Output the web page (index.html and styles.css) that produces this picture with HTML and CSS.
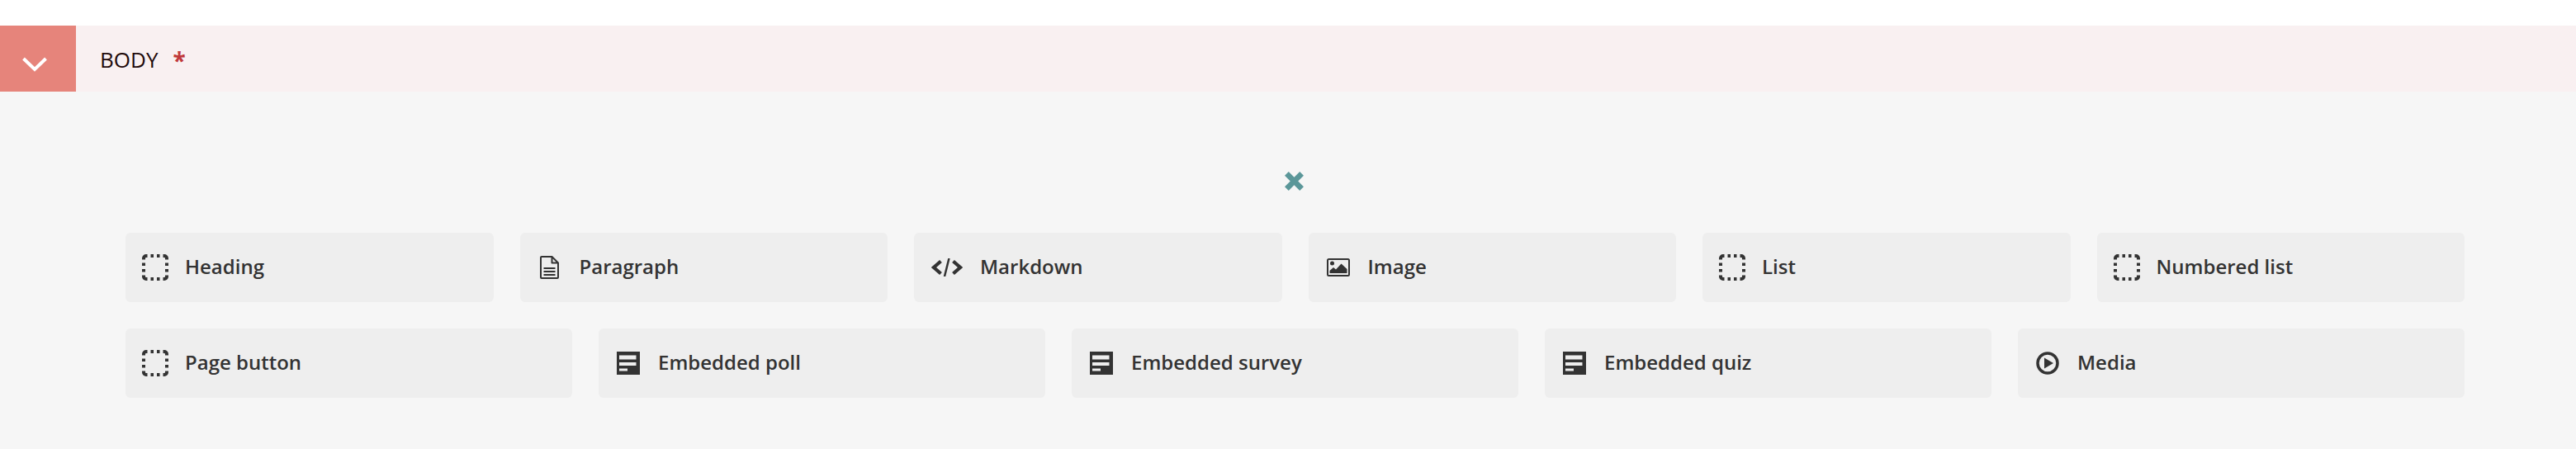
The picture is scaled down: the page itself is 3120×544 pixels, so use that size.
FILE: index.html
```html
<!DOCTYPE html>
<html lang="en">
<head>
<meta charset="utf-8">
<title>Body</title>
<link rel="stylesheet" href="styles.css">
</head>
<body>
<svg class="defs" width="0" height="0" aria-hidden="true">
  <defs>
    <symbol id="i-dashed" viewBox="0 0 32 32">
      <path fill="none" stroke="#333" stroke-width="4" d="M2 6.500V5a3 3 0 0 1 3-3h1.500M10.500 2h3.500M18 2h3.500M25.500 2H27a3 3 0 0 1 3 3v1.500M30 10.500V14M30 18v3.500M30 25.500V27a3 3 0 0 1-3 3h-1.500M21.500 30H18M14 30h-3.500M6.500 30H5a3 3 0 0 1-3-3v-1.500M2 21.500V18M2 14v-3.500"/>
    </symbol>
    <symbol id="i-doc" viewBox="0 0 23 28">
      <path fill="none" stroke="#333" stroke-width="2" stroke-linejoin="round" d="M2 1h12.500L22 8.500V26a1 1 0 0 1-1 1H2a1 1 0 0 1-1-1V2a1 1 0 0 1 1-1zM14.500 1v7.500H22"/>
      <path fill="none" stroke="#333" stroke-width="2" d="M4.500 15h14M4.500 19h14M4.500 23h14" />
    </symbol>
    <symbol id="i-code" viewBox="0 0 38 22">
      <path fill="none" stroke="#333" stroke-width="4.200" d="M11.500 3.500 3 11l8.500 7.500M26.500 3.500 35 11l-8.500 7.500"/>
      <path fill="none" stroke="#333" stroke-width="2.500" d="M21.500 0 16 22"/>
    </symbol>
    <symbol id="i-image" viewBox="0 0 28 22">
      <rect x="1" y="1" width="26" height="20" rx="1.500" fill="none" stroke="#333" stroke-width="2"/>
      <circle cx="6.500" cy="6" r="2.500" fill="#333"/>
      <path fill="#333" d="M3.500 18v-3l4.500-4 3 2.500L17.500 6.500 24.500 13v5z"/>
    </symbol>
    <symbol id="i-form" viewBox="0 0 28 28">
      <path fill="#333" fill-rule="evenodd" d="M0 0h28v28H0zM3 4.500v5h20.500v-5zM3 13v4h20.500v-4zM3 20.500v3h10v-3z"/>
    </symbol>
    <symbol id="i-play" viewBox="0 0 28 28">
      <circle cx="14" cy="14" r="12" fill="none" stroke="#333" stroke-width="3.500"/>
      <path fill="#333" d="M10 7.500 21 14l-11 6.500z"/>
    </symbol>
  </defs>
</svg>

<section class="field">
  <header class="field-head">
    <button class="toggle" type="button" aria-label="Collapse">
      <svg class="chevron" viewBox="0 0 30 18"><path fill="none" stroke="#fff" stroke-width="4" d="M1.500 2l13.500 13L28.500 2"/></svg>
    </button>
    <span class="field-title">BODY</span>
    <span class="required">*</span>
  </header>

  <div class="picker">
    <button class="close" type="button" aria-label="Close">
      <svg class="close-icon" viewBox="0 0 24 24"><path fill="none" stroke="#5b9799" stroke-width="7" d="M2.500 2.500l19 19M21.500 2.500l-19 19"/></svg>
    </button>

    <div class="row row-six">
      <div class="block"><svg class="ico ico-dashed"><use href="#i-dashed"/></svg><span class="label">Heading</span></div>
      <div class="block"><svg class="ico ico-doc"><use href="#i-doc"/></svg><span class="label">Paragraph</span></div>
      <div class="block"><svg class="ico ico-code"><use href="#i-code"/></svg><span class="label">Markdown</span></div>
      <div class="block"><svg class="ico ico-image"><use href="#i-image"/></svg><span class="label">Image</span></div>
      <div class="block"><svg class="ico ico-dashed"><use href="#i-dashed"/></svg><span class="label">List</span></div>
      <div class="block"><svg class="ico ico-dashed"><use href="#i-dashed"/></svg><span class="label">Numbered list</span></div>
    </div>

    <div class="row row-five">
      <div class="block"><svg class="ico ico-dashed"><use href="#i-dashed"/></svg><span class="label">Page button</span></div>
      <div class="block"><svg class="ico ico-form"><use href="#i-form"/></svg><span class="label">Embedded poll</span></div>
      <div class="block"><svg class="ico ico-form"><use href="#i-form"/></svg><span class="label">Embedded survey</span></div>
      <div class="block"><svg class="ico ico-form"><use href="#i-form"/></svg><span class="label">Embedded quiz</span></div>
      <div class="block"><svg class="ico ico-play"><use href="#i-play"/></svg><span class="label">Media</span></div>
    </div>
  </div>
</section>
</body>
</html>
```

FILE: styles.css
```css
* { box-sizing: border-box; }

html, body {
  margin: 0;
  height: 100%;
  background: #fff;
}

body {
  padding-top: 31px;
  overflow: hidden;
  font-family: "Open Sans", "Liberation Sans", sans-serif;
}

.defs { display: block; height: 0; }

.field {
  display: flex;
  flex-direction: column;
  height: 513px;
  background: #f6f6f6;
}

.field-head {
  display: flex;
  align-items: center;
  height: 80px;
  background: #f9f0f1;
}

.toggle {
  display: flex;
  align-items: center;
  justify-content: center;
  width: 92px;
  height: 80px;
  margin-right: 29px;
  padding: 13px 8px 0 0;
  border: 0;
  background: #e6847b;
}

.chevron { flex: none; width: 30px; height: 18px; }

.field-title {
  position: relative;
  top: 1px;
  font-size: 26px;
  color: #1f0a0a;
}

.required {
  position: relative;
  top: 2px;
  margin-left: 18px;
  font-size: 28px;
  font-weight: 700;
  color: #c0393b;
}

.picker {
  display: flex;
  flex-direction: column;
  padding: 97px 135px 0 152px;
}

.close {
  align-self: center;
  display: flex;
  margin: 0 3px 51px 0;
  padding: 0;
  border: 0;
  background: none;
}

.close-icon { width: 23px; height: 23px; }

.row { display: grid; gap: 32px; }
.row + .row { margin-top: 32px; }
.row-six { grid-template-columns: repeat(6, 1fr); }
.row-five { grid-template-columns: repeat(5, 1fr); }

.block {
  display: flex;
  align-items: center;
  height: 84px;
  padding-left: 20px;
  border-radius: 6px;
  background: #eee;
}

.ico { flex: none; }
.ico-dashed { width: 32px; height: 32px; margin-right: 20px; }
.ico-doc { width: 23px; height: 28px; margin-left: 4px; margin-right: 25px; }
.ico-code { width: 38px; height: 22px; margin-left: 1px; margin-right: 21px; }
.ico-image { width: 28px; height: 22px; margin-left: 2px; margin-right: 22px; }
.ico-form { width: 28px; height: 28px; margin-left: 2px; margin-right: 22px; }
.ico-play { width: 28px; height: 28px; margin-left: 2px; margin-right: 22px; }

.label {
  margin-bottom: 4px;
  font-size: 24px;
  font-weight: 540;
  color: #333;
}
```
